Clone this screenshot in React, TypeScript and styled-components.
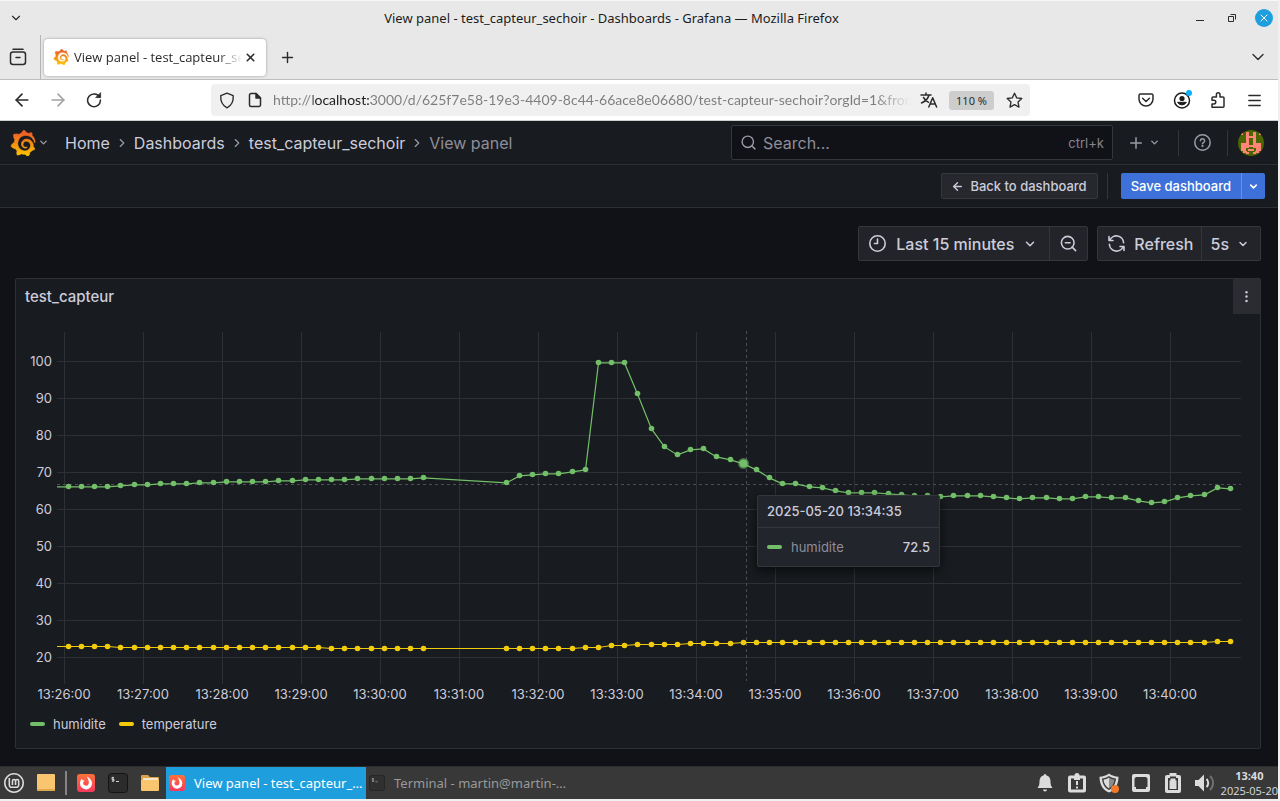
import React from "react";
import styled, { createGlobalStyle, css } from "styled-components";
import {
  ArrowLeft,
  ArrowRight,
  ChevronDown,
  ChevronRight,
  EllipsisVertical,
  Menu,
  Plus,
  Search,
  X,
  ZoomOut,
} from "lucide-react";
import { SiGrafana, SiLinuxmint } from "react-icons/si";

const SYSTEM_FONT = '"Noto Sans", "Open Sans", sans-serif';
const NARROW_SYSTEM_FONT = '"Open Sans", "Noto Sans", sans-serif';
const APP_FONT = 'Inter, "Liberation Sans", sans-serif';

const GlobalStyle = createGlobalStyle`
  *, *::before, *::after { box-sizing: border-box; }
  body { margin: 0; background: #f0f0f0; }
  button, input { font: inherit; color: inherit; margin: 0; }
  button { border: 0; padding: 0; background: none; cursor: pointer; }
  a { color: inherit; text-decoration: none; }
  svg { display: block; flex: none; }
`;

const Desktop = styled.div`
  display: flex;
  flex-direction: column;
  min-height: 100vh;
  padding: 0 2px 2px 0;
  font-family: ${SYSTEM_FONT};
`;

/* ---------- window frame ---------- */

const TitleBar = styled.header`
  display: flex;
  align-items: center;
  height: 35px;
  border-top: 1px solid #f8f8f8;
  background: #e8e8e8;
  color: #2b2b2b;
`;

const WindowMenu = styled.button`
  display: flex;
  align-items: center;
  justify-content: center;
  width: 32px;
  height: 32px;
`;

const WindowTitle = styled.h1`
  flex: 1;
  margin: 0;
  text-align: center;
  font-size: 13px;
  line-height: 18px;
  font-weight: 400;
  color: #1c1c1c;
`;

const WindowControls = styled.div`
  display: flex;
  align-items: center;
  gap: 14px;
  padding-right: 5px;
`;

const WindowControl = styled.button<{ $close?: boolean }>`
  display: flex;
  align-items: center;
  justify-content: center;
  width: 18px;
  height: 18px;
  border-radius: 9px;
  color: ${(p) => (p.$close ? "#fff" : "#2b2b2b")};
  background: ${(p) => (p.$close ? "#1f9ede" : "transparent")};
`;

/* ---------- browser chrome ---------- */

const TabStrip = styled.div`
  display: flex;
  align-items: center;
  height: 45px;
  border-bottom: 1px solid #bdbdbd;
  background: #e8e8e8;
  color: #2b2b2b;
`;

const ChromeButton = styled.button<{ $size?: number; $dim?: boolean }>`
  display: flex;
  align-items: center;
  justify-content: center;
  width: ${(p) => p.$size ?? 36}px;
  height: 32px;
  flex: none;
  color: ${(p) => (p.$dim ? "#a3a3a3" : "#2b2b2b")};
`;

const TabDivider = styled.span`
  width: 1px;
  align-self: stretch;
  margin: 0 3px 0 4px;
  background: #b4b4b4;
`;

const Tab = styled.div`
  display: flex;
  align-items: center;
  width: 222px;
  height: 37px;
  padding: 0 8px 0 9px;
  border-radius: 4px;
  background: #fff;
  box-shadow: 0 0 3px rgba(0, 0, 0, 0.35);
`;

const TabLabel = styled.button`
  flex: 1;
  min-width: 0;
  margin-left: 5px;
  overflow: hidden;
  white-space: nowrap;
  text-align: left;
  font-family: ${NARROW_SYSTEM_FONT};
  font-size: 13px;
  line-height: 20px;
  color: #2b2b2b;
  mask-image: linear-gradient(90deg, #000 calc(100% - 24px), transparent);
`;

const TabClose = styled.button`
  display: flex;
  align-items: center;
  justify-content: center;
  width: 16px;
  height: 24px;
`;

const Spacer = styled.span`
  flex: 1;
`;

const ToolBar = styled.nav`
  display: flex;
  align-items: center;
  height: 41px;
  padding: 0 6px 0 4px;
  border-bottom: 1px solid #cfcfcf;
  background: #fff;
`;

const AddressBar = styled.div`
  display: flex;
  align-items: center;
  flex: 1;
  min-width: 0;
  height: 32px;
  margin: 0 98px 0 99px;
  padding: 0 2px;
  border-radius: 4px;
  background: #f0f0f0;
`;

const Address = styled.input`
  flex: 1;
  min-width: 0;
  margin: 0 4px;
  padding: 0;
  border: 0;
  outline: 0;
  font-family: Lato, ${NARROW_SYSTEM_FONT};
  font-size: 14px;
  line-height: 24px;
  color: #7c7c7c;
  background: linear-gradient(
    90deg,
    #7c7c7c 40px,
    #1c1c1c 40px,
    #1c1c1c 98px,
    #7c7c7c 98px,
    #7c7c7c calc(100% - 36px),
    #f0f0f0
  );
  background-clip: text;
  -webkit-background-clip: text;
  -webkit-text-fill-color: transparent;
`;

const ZoomLevel = styled.button`
  width: 45px;
  height: 19px;
  margin: 0 6px;
  border-radius: 3px;
  background: #cdcdcd;
  color: #2b2b2b;
  font-size: 11px;
  line-height: 19px;
`;

/* ---------- Grafana header ---------- */

const Page = styled.div`
  display: flex;
  flex-direction: column;
  flex: 1;
  background: #111217;
  color: #ccccdc;
  font-family: ${APP_FONT};
`;

const NavBar = styled.header`
  display: flex;
  align-items: center;
  height: 44px;
  padding: 0 14px 0 8px;
  border-bottom: 1px solid #2d2f34;
  background: #181b1f;
`;

const HomeMenu = styled.button`
  display: flex;
  align-items: center;
  gap: 2px;
  color: #9b9ba7;
`;

const Crumbs = styled.ol`
  display: flex;
  align-items: center;
  gap: 5px;
  flex: 1;
  margin: 0 0 0 16px;
  padding: 0;
  list-style: none;
  font-size: 16px;
  line-height: 24px;
`;

const Crumb = styled.li<{ $current?: boolean }>`
  display: flex;
  align-items: center;
  gap: 5px;
  color: ${(p) => (p.$current ? "#8e8e9a" : "#ccccdc")};
  svg { color: #9b9ba7; }
`;

const SearchBox = styled.label`
  display: flex;
  align-items: center;
  gap: 6px;
  width: 382px;
  height: 35px;
  padding: 0 8px;
  border: 1px solid #34363c;
  border-radius: 2px;
  background: #111217;
  color: #9b9ba7;
  font-size: 16px;
`;

const SearchInput = styled.input`
  flex: 1;
  min-width: 0;
  padding: 0;
  border: 0;
  outline: 0;
  background: none;
  &::placeholder { color: #8e8e9a; opacity: 1; }
`;

const Shortcut = styled.kbd`
  font-family: ${APP_FONT};
  font-size: 13px;
  color: #85858f;
`;

const NavAction = styled.button<{ $gap: number }>`
  display: flex;
  align-items: center;
  gap: 4px;
  margin-left: ${(p) => p.$gap}px;
  color: #9b9ba7;
`;

const Separator = styled.span<{ $before: number }>`
  width: 1px;
  height: 26px;
  margin-left: ${(p) => p.$before}px;
  background: #34363c;
`;

const ActionBar = styled.div`
  display: flex;
  align-items: center;
  justify-content: flex-end;
  height: 43px;
  padding: 0 13px;
  border-bottom: 1px solid #2d2f34;
  background: #181b1f;
`;

const smallButton = css`
  display: flex;
  align-items: center;
  height: 26px;
  font-size: 13px;
  line-height: 24px;
  font-weight: 500;
`;

const BackButton = styled.button`
  ${smallButton}
  gap: 6px;
  padding: 0 10px 0 9px;
  border: 1px solid #36383e;
  border-radius: 2px;
  background: #26282d;
  color: #ccccdc;
`;

const SaveGroup = styled.div`
  display: flex;
  margin-left: 13px;
`;

const SaveButton = styled.button`
  ${smallButton}
  padding: 0 10px;
  border-radius: 2px 0 0 2px;
  background: #3d71d9;
  color: #fff;
  & + & {
    width: 24px;
    padding: 0;
    justify-content: center;
    border-left: 1px solid #6a92e2;
    border-radius: 0 2px 2px 0;
  }
`;

/* ---------- dashboard body ---------- */

const Body = styled.main`
  display: flex;
  flex-direction: column;
  flex: 1;
  gap: 17px;
  padding: 18px 17px 17px 15px;
`;

const TimeControls = styled.div`
  display: flex;
  justify-content: flex-end;
  gap: 9px;
`;

const ButtonGroup = styled.div`
  display: flex;
  border: 1px solid #34363b;
  border-radius: 2px;
  background: #222429;
`;

const GroupButton = styled.button<{ $gap?: number; $pad?: string }>`
  display: flex;
  align-items: center;
  gap: ${(p) => p.$gap ?? 8}px;
  height: 33px;
  padding: ${(p) => p.$pad ?? "0 9px"};
  font-size: 16px;
  font-weight: 500;
  color: #ccccdc;
  & + & { border-left: 1px solid #34363b; }
`;

const Panel = styled.section`
  border: 1px solid #2d2f34;
  border-radius: 2px;
  background: #181b1f;
`;

const PanelHeader = styled.header`
  display: flex;
  align-items: center;
  justify-content: space-between;
  height: 35px;
  padding-left: 9px;
`;

const PanelTitle = styled.h2`
  margin: 0;
  font-size: 15px;
  line-height: 22px;
  font-weight: 500;
`;

const PanelMenu = styled.button`
  display: flex;
  align-items: center;
  justify-content: center;
  width: 27px;
  height: 35px;
  background: #2a2c31;
  color: #ccccdc;
`;

const ChartArea = styled.div`
  position: relative;
`;

const Chart = styled.svg`
  width: 100%;
  height: auto;
  text {
    font-family: ${APP_FONT};
    font-size: 13px;
    fill: #ccccdc;
  }
`;

const Legend = styled.ul`
  display: flex;
  gap: 13px;
  height: 38px;
  margin: 0;
  padding: 4px 14px;
  list-style: none;
`;

const LegendItem = styled.button`
  display: flex;
  align-items: center;
  gap: 8px;
  font-size: 13px;
  line-height: 20px;
`;

const Swatch = styled.span<{ $color: string }>`
  width: 15px;
  height: 4px;
  border-radius: 2px;
  background: ${(p) => p.$color};
`;

const Tooltip = styled.div`
  position: absolute;
  left: 741px;
  top: 181px;
  width: 183px;
  border: 1px solid #34363c;
  border-radius: 2px;
  background: #22252b;
  box-shadow: 0 4px 10px rgba(0, 0, 0, 0.6);
  font-size: 13px;
  font-weight: 500;
`;

const TooltipTime = styled.div`
  height: 32px;
  padding: 0 9px;
  border-bottom: 1px solid #34363c;
  line-height: 31px;
`;

const TooltipRow = styled.div`
  display: flex;
  align-items: center;
  gap: 9px;
  height: 38px;
  padding: 0 9px;
`;

const TooltipName = styled.span`
  flex: 1;
  font-weight: 400;
  color: #8e8e9a;
`;

/* ---------- desktop task bar ---------- */

const TaskBar = styled.footer`
  display: flex;
  align-items: center;
  height: 33px;
  padding-left: 4px;
  border-top: 1px solid #2c2c2c;
  background: #383838;
  color: #dcdcdc;
`;

const Launchers = styled.div`
  display: flex;
  align-items: center;
  gap: 12px;
  padding-right: 6px;
`;

const Launcher = styled.button`
  display: flex;
  align-items: center;
  justify-content: center;
  width: 20px;
  height: 20px;
`;

const LauncherDivider = styled.span`
  width: 2px;
  height: 24px;
  margin: 0 -3px;
  background: #858585;
`;

const Task = styled.button<{ $active?: boolean }>`
  display: flex;
  align-items: center;
  gap: 9px;
  width: 200px;
  height: 32px;
  padding-left: 3px;
  background: ${(p) => (p.$active ? "#1f9ede" : "transparent")};
  color: ${(p) => (p.$active ? "#fff" : "#9a9a9a")};
  font-size: 13px;
  line-height: 20px;
  span { white-space: nowrap; }
`;

const Tray = styled.div`
  display: flex;
  align-items: center;
  gap: 12px;
  margin-left: auto;
`;

const Clock = styled.time`
  display: flex;
  flex-direction: column;
  align-items: center;
  margin-left: -6px;
  font-family: ${NARROW_SYSTEM_FONT};
  font-size: 11px;
  line-height: 15px;
`;

/* ---------- drawings ---------- */

const stroke = {
  fill: "none",
  stroke: "currentColor",
  strokeLinecap: "round" as const,
  strokeLinejoin: "round" as const,
};

const ArchiveIcon = () => (
  <svg width="18" height="18" viewBox="0 0 18 18" {...stroke} strokeWidth="1.5">
    <path d="M4 1.2h10" />
    <rect x="1.5" y="4" width="15" height="12.5" rx="2.5" />
    <path d="M7 9.500h4" />
  </svg>
);

const ReloadIcon = () => (
  <svg width="16" height="16" viewBox="0 0 16 16" {...stroke} strokeWidth="1.5">
    <path d="M13.6 5.2A6.4 6.4 0 1 0 14.4 8" />
    <path d="M10 5.6h4.6V1z" fill="currentColor" strokeWidth="0.8" />
  </svg>
);

const ShieldIcon = () => (
  <svg width="16" height="17" viewBox="0 0 16 17" {...stroke} strokeWidth="1.4">
    <path d="M8 1.2 14.2 3.6c.4 5.4-1.6 9.8-6.2 12.2C3.4 13.4 1.400 9 1.800 3.600z" />
  </svg>
);

const PageIcon = () => (
  <svg width="14" height="16" viewBox="0 0 14 16" {...stroke} strokeWidth="1.5">
    <path d="M8 1.500H3a1.500 1.500 0 0 0-1.500 1.500v10A1.500 1.500 0 0 0 3 14.500h8a1.500 1.500 0 0 0 1.500-1.500V6z" />
    <path d="M8 1.500V6h4.500z" fill="currentColor" />
  </svg>
);

const TranslateIcon = () => (
  <svg width="18" height="16" viewBox="0 0 18 16" {...stroke} strokeWidth="1.5">
    <path d="M1 3h10M6 1v2M9 3C8 7 5 9.500 1.500 11M3.500 5.500C5 8 6.500 9.300 8.500 10.300" />
    <path d="M8.800 15 12.700 5.800 16.600 15M10 12h5.400" />
  </svg>
);

const StarIcon = () => (
  <svg width="17" height="17" viewBox="0 0 17 17" {...stroke} strokeWidth="1.3">
    <path d="M8.500 1.200 10.700 5.900l5.100.6-3.800 3.500 1 5.100-4.500-2.500L4 15.100 5 10 1.200 6.500l5.100-.6z" />
  </svg>
);

const PocketIcon = () => (
  <svg width="16" height="14" viewBox="0 0 16 14" {...stroke} strokeWidth="1.500">
    <path d="M2.500 1h11A1.500 1.500 0 0 1 15 2.500V6A7 7 0 0 1 1 6V2.500A1.500 1.500 0 0 1 2.500 1z" />
    <path d="M4.600 5.200 8 8.500l3.400-3.300" />
  </svg>
);

const AccountIcon = () => (
  <svg width="20" height="20" viewBox="0 0 20 20">
    <circle cx="10" cy="10.500" r="7.500" fill="none" stroke="#1c1c1c" strokeWidth="1.500" />
    <circle cx="10" cy="8.500" r="2.600" fill="#1c1c1c" />
    <path d="M5.600 12.300h8.800a5 5 0 0 1-8.800 0z" fill="#1c1c1c" stroke="#1c1c1c" />
    <circle cx="17" cy="3" r="3" fill="#0ab1fb" />
  </svg>
);

const ExtensionIcon = () => (
  <svg width="16" height="18" viewBox="0 0 16 18" {...stroke} strokeWidth="1.500">
    <path d="M2 16.300h11a1 1 0 0 0 1-1V7a1 1 0 0 0-1-1h-3V3.500a1.800 1.800 0 0 0-3.600 0V6H3a1 1 0 0 0-1 1v2.300h2a1.700 1.700 0 0 1 0 3.600H2z" />
  </svg>
);

const GrafanaMark = ({ size, id }: { size: number; id: string }) => (
  <>
    <svg width="0" height="0">
      <defs>
        <linearGradient id={id} x1="0" y1="1" x2="0" y2="0">
          <stop offset="0" stopColor="#fcc600" />
          <stop offset="1" stopColor="#f0522a" />
        </linearGradient>
      </defs>
    </svg>
    <SiGrafana size={size} fill={`url(#${id})`} stroke={`url(#${id})`} strokeWidth="0.7" />
  </>
);

const HelpIcon = () => (
  <svg width="19" height="19" viewBox="0 0 19 19" {...stroke} strokeWidth="1.500">
    <circle cx="9.500" cy="9.500" r="7.700" />
    <path d="M7.400 7.700a2.100 2.100 0 1 1 2.900 2c-.6.200-.8.500-.8 1" />
    <circle cx="9.500" cy="13" r=".4" fill="currentColor" />
  </svg>
);

const ClockIcon = () => (
  <svg width="19" height="19" viewBox="0 0 19 19" {...stroke} strokeWidth="1.600">
    <circle cx="9.500" cy="9.500" r="7.700" />
    <path d="M9.500 5v4.500H6.500" />
  </svg>
);

const RefreshIcon = () => (
  <svg width="19" height="19" viewBox="0 0 19 19" {...stroke} strokeWidth="1.600">
    <path d="M2 2.500v4h4M2.700 6.500A7.200 7.200 0 0 1 16.600 8.700" />
    <path d="M17 16.500v-4h-4M16.300 12.500A7.200 7.200 0 0 1 2.400 10.300" />
  </svg>
);

const Avatar = () => (
  <svg width="26" height="26" viewBox="0 0 26 26">
    <clipPath id="avatar-clip">
      <circle cx="13" cy="13" r="13" />
    </clipPath>
    <g clipPath="url(#avatar-clip)">
      <path fill="#4b6404" d="M0 0h26v26H0z" />
      <path
        fill="#ff8577"
        d="M8 2h3v4h4V2h3v10h-3V8h-4v4H8zM3 3h2v2H3zM21 3h2v2h-2zM3 13h5v-1h3v3h4v-3h3v1h5v8h-5v-3h-3v-1h-4v1H8v3H3zM5 21h4v2H5zM17 21h4v2h-4zM10 19h6v2h-6zM8 22h3v2H8zM15 22h3v2h-3z"
      />
    </g>
  </svg>
);

const FirefoxIcon = ({ size }: { size: number }) => (
  <svg width={size} height={size} viewBox="0 0 18 18">
    <defs>
      <linearGradient id="fox" x1="0" y1="0" x2="0" y2="1">
        <stop offset="0" stopColor="#ff7139" />
        <stop offset="1" stopColor="#f5395f" />
      </linearGradient>
    </defs>
    <rect width="18" height="18" rx="3" fill="url(#fox)" />
    <path
      fill="#fff"
      d="M9.500 2.500c2.800 1.200 5.500 3.500 5.500 7A6 6 0 0 1 3 9.300c0-2 .8-3.500 1.800-4.800l.7 1.800 2.300.3-1.500 1.500c-.7 1.600.6 3.600 2.700 3.600 3.400 0 4-4.500.5-9.200z"
    />
  </svg>
);

const TerminalIcon = ({ size, faded }: { size: number; faded?: boolean }) => (
  <svg width={size} height={size} viewBox="0 0 20 20" opacity={faded ? 0.6 : 1}>
    <rect x=".5" y=".5" width="19" height="19" rx="3" fill="#2b2b2b" stroke="#141414" />
    <path d="M6 4.500H4v1.800h2V8H3.800M5 3.800v5M8 8.500h3" fill="none" stroke="#d0d0d0" strokeWidth="1" />
  </svg>
);

const DesktopIcon = () => (
  <svg width="18" height="18" viewBox="0 0 18 18">
    <rect width="18" height="17" rx="1" fill="#f9c66f" />
    <path d="M0 15h18v2H0z" fill="#e0a951" />
  </svg>
);

const FolderIcon = () => (
  <svg width="18" height="18" viewBox="0 0 18 18">
    <path d="M0 2a1 1 0 0 1 1-1h6l2 2h8a1 1 0 0 1 1 1v6H0z" fill="#dca248" />
    <path d="M2 4h15v3H2z" fill="#f3e6cc" />
    <path d="M0 6h18v10a1 1 0 0 1-1 1H1a1 1 0 0 1-1-1z" fill="#f9c66f" />
  </svg>
);

const TrayIcon = ({ children, label }: { children: React.ReactNode; label: string }) => (
  <Launcher aria-label={label}>
    <svg width="20" height="20" viewBox="0 0 20 20" fill="#dcdcdc">
      {children}
    </svg>
  </Launcher>
);

/* ---------- chart data ---------- */

const BEFORE_GAP = { start: 68.2, count: 28 };
const AFTER_GAP = { start: 506.3, count: 56 };
const STEP = 79 / 6;

const fill = (pairs: [number, number][]) =>
  pairs.flatMap(([y, n]) => Array<number>(n).fill(y));

const xs = [BEFORE_GAP, AFTER_GAP].flatMap(({ start, count }) =>
  Array.from({ length: count }, (_, k) => Math.floor(start + k * STEP) + 0.5)
);

const humidity = fill([
  [486, 4], [485, 1], [484, 2], [483, 3], [482, 2], [481, 4], [480, 2], [479, 4], [478, 5], [477, 1],
  [482, 1], [475, 1], [474, 1], [473, 2], [471, 1], [469, 1], [362, 3], [393, 1], [428, 1], [446, 1],
  [454, 1], [449, 1], [448, 1], [456, 1], [459, 1], [463, 1], [469, 1], [477, 1], [483, 2], [486, 1],
  [487, 1], [490, 1], [492, 3], [493, 1], [494, 1], [495, 2], [496, 1], [495, 3], [496, 1], [497, 1],
  [498, 1], [497, 2], [498, 2], [496, 2], [497, 2], [500, 1], [502, 1], [501, 1], [497, 1], [495, 1],
  [494, 1], [487, 1], [488, 1],
]);

const temperature = fill([
  [646, 4], [647, 16], [648, 8],
  [648, 6], [647, 2], [645, 2], [644, 4], [643, 4], [642, 36], [641, 2],
]);

const tracePath = (ys: number[], shift: number) =>
  `M57 ${ys[0] + shift}` + ys.map((y, i) => `L${xs[i]} ${y + shift}`).join("");

const yTicks = Array.from({ length: 9 }, (_, i) => ({ label: 100 - i * 10, y: 361.5 + i * 37 }));
const xTicks = Array.from({ length: 15 }, (_, i) => ({ label: `13:${26 + i}:00`, x: 64.5 + i * 79 }));

const GREEN = "#73bf69";
const YELLOW = "#f2cc0c";

const SensorChart = () => (
  <Chart viewBox="16 314 1244 396" role="img" aria-label="humidite, temperature">
    <g stroke="#2d3034">
      {yTicks.map((t) => (
        <line key={t.label} x1="57" x2="1241" y1={t.y} y2={t.y} />
      ))}
      {xTicks.map((t) => (
        <line key={t.label} x1={t.x} x2={t.x} y1="332" y2="684" />
      ))}
    </g>
    {yTicks.map((t) => (
      <text key={t.label} x="52" y={t.y + 4} textAnchor="end">
        {t.label}
      </text>
    ))}
    {xTicks.map((t) => (
      <text key={t.label} x={t.x - 0.5} y="699" textAnchor="middle">
        {t.label}
      </text>
    ))}
    <g stroke="#4c4e53" strokeDasharray="3 3">
      <line x1="746.500" x2="746.500" y1="331" y2="681" />
      <line x1="57" x2="1241" y1="484.500" y2="484.500" />
    </g>
    <g fill="none">
      <path d={tracePath(humidity, 0.9)} stroke={GREEN} strokeWidth="1.2" />
      <path d={tracePath(temperature, 0.5)} stroke={YELLOW} />
    </g>
    <g fill={GREEN}>
      {humidity.map((y, i) => (
        <circle key={i} cx={xs[i]} cy={y + 0.5} r="2.800" />
      ))}
    </g>
    <g fill={YELLOW}>
      {temperature.map((y, i) => (
        <circle key={i} cx={xs[i]} cy={y + 0.5} r="2.800" />
      ))}
    </g>
    <circle cx="743.500" cy="463.500" r="5.500" fill={GREEN} fillOpacity="0.5" />
    <circle cx="743.500" cy="463.500" r="4" fill={GREEN} />
  </Chart>
);

export default function App() {
  return (
    <Desktop>
      <GlobalStyle />
      <TitleBar>
        <WindowMenu aria-label="Window menu">
          <ChevronDown size={14} strokeWidth={2} />
        </WindowMenu>
        <WindowTitle>View panel - test_capteur_sechoir - Dashboards - Grafana — Mozilla Firefox</WindowTitle>
        <WindowControls>
          <WindowControl aria-label="Minimize">
            <svg width="8" height="8" viewBox="0 0 8 8"><path d="M0 6.500h8" stroke="currentColor" /></svg>
          </WindowControl>
          <WindowControl aria-label="Restore">
            <svg width="8" height="8" viewBox="0 0 8 8" fill="none" stroke="currentColor">
              <path d="M.5 2.500h5v5h-5zM2.500.5h5v5" />
            </svg>
          </WindowControl>
          <WindowControl $close aria-label="Close">
            <X size={12} strokeWidth={2} />
          </WindowControl>
        </WindowControls>
      </TitleBar>

      <TabStrip>
        <ChromeButton aria-label="Recent browsing"><ArchiveIcon /></ChromeButton>
        <TabDivider />
        <Tab>
          <GrafanaMark size={16} id="tab-flame" />
          <TabLabel>View panel - test_capteur_sechoir</TabLabel>
          <TabClose aria-label="Close tab"><X size={13} strokeWidth={3} /></TabClose>
        </Tab>
        <ChromeButton $size={42} aria-label="New tab"><Plus size={17} strokeWidth={2} /></ChromeButton>
        <Spacer />
        <ChromeButton $size={40} aria-label="List all tabs"><ChevronDown size={20} strokeWidth={1.6} /></ChromeButton>
      </TabStrip>

      <ToolBar>
        <ChromeButton aria-label="Back"><ArrowLeft size={20} strokeWidth={2} /></ChromeButton>
        <ChromeButton $dim aria-label="Forward"><ArrowRight size={20} strokeWidth={2} /></ChromeButton>
        <ChromeButton aria-label="Reload"><ReloadIcon /></ChromeButton>
        <AddressBar>
          <ChromeButton $size={28} aria-label="Tracking protection"><ShieldIcon /></ChromeButton>
          <ChromeButton $size={28} aria-label="Site information"><PageIcon /></ChromeButton>
          <Address
            aria-label="Address"
            defaultValue="http://localhost:3000/d/625f7e58-19e3-4409-8c44-66ace8e06680/test-capteur-sechoir?orgId=1&from"
          />
          <ChromeButton $size={28} aria-label="Translate"><TranslateIcon /></ChromeButton>
          <ZoomLevel>110 %</ZoomLevel>
          <ChromeButton $size={28} aria-label="Bookmark"><StarIcon /></ChromeButton>
        </AddressBar>
        <ChromeButton aria-label="Pocket"><PocketIcon /></ChromeButton>
        <ChromeButton aria-label="Account"><AccountIcon /></ChromeButton>
        <ChromeButton aria-label="Extensions"><ExtensionIcon /></ChromeButton>
        <ChromeButton aria-label="Menu"><Menu size={17} strokeWidth={2} /></ChromeButton>
      </ToolBar>

      <Page>
        <NavBar>
          <HomeMenu aria-label="Grafana menu">
            <GrafanaMark size={26} id="nav-flame" />
            <ChevronDown size={11} strokeWidth={3} />
          </HomeMenu>
          <Crumbs>
            <Crumb><a href="#home">Home</a><ChevronRight size={14} /></Crumb>
            <Crumb><a href="#dashboards">Dashboards</a><ChevronRight size={14} /></Crumb>
            <Crumb><a href="#dashboard">test_capteur_sechoir</a><ChevronRight size={14} /></Crumb>
            <Crumb $current>View panel</Crumb>
          </Crumbs>
          <SearchBox>
            <Search size={17} strokeWidth={2} />
            <SearchInput aria-label="Search" placeholder="Search..." />
            <Shortcut>ctrl+k</Shortcut>
          </SearchBox>
          <NavAction $gap={14} aria-label="New">
            <Plus size={18} strokeWidth={2} />
            <ChevronDown size={11} strokeWidth={3} />
          </NavAction>
          <Separator $before={18} />
          <NavAction $gap={14} aria-label="Help"><HelpIcon /></NavAction>
          <Separator $before={15} />
          <NavAction $gap={10} aria-label="Profile"><Avatar /></NavAction>
        </NavBar>

        <ActionBar>
          <BackButton>
            <ArrowLeft size={13} strokeWidth={2.5} />
            Back to dashboard
          </BackButton>
          <Separator $before={9} />
          <SaveGroup>
            <SaveButton>Save dashboard</SaveButton>
            <SaveButton aria-label="More save options"><ChevronDown size={11} strokeWidth={3.5} /></SaveButton>
          </SaveGroup>
        </ActionBar>

        <Body>
          <TimeControls>
            <ButtonGroup>
              <GroupButton $gap={9} $pad="0 12px 0 9px">
                <ClockIcon />
                Last 15 minutes
                <ChevronDown size={14} strokeWidth={2.6} />
              </GroupButton>
              <GroupButton aria-label="Zoom out"><ZoomOut size={19} strokeWidth={2} /></GroupButton>
            </ButtonGroup>
            <ButtonGroup>
              <GroupButton $gap={8} $pad="0 8px 0 9px"><RefreshIcon />Refresh</GroupButton>
              <GroupButton $pad="0 11px 0 8px">
                5s
                <ChevronDown size={12} strokeWidth={3} />
              </GroupButton>
            </ButtonGroup>
          </TimeControls>

          <Panel>
            <PanelHeader>
              <PanelTitle>test_capteur</PanelTitle>
              <PanelMenu aria-label="Panel menu"><EllipsisVertical size={15} /></PanelMenu>
            </PanelHeader>
            <ChartArea>
              <SensorChart />
              <Tooltip role="tooltip">
                <TooltipTime>2025-05-20 13:34:35</TooltipTime>
                <TooltipRow>
                  <Swatch $color={GREEN} />
                  <TooltipName>humidite</TooltipName>
                  <span>72.5</span>
                </TooltipRow>
              </Tooltip>
            </ChartArea>
            <Legend>
              <li><LegendItem><Swatch $color={GREEN} />humidite</LegendItem></li>
              <li><LegendItem><Swatch $color={YELLOW} />temperature</LegendItem></li>
            </Legend>
          </Panel>
        </Body>
      </Page>

      <TaskBar>
        <Launchers>
          <Launcher aria-label="Menu"><SiLinuxmint size={20} /></Launcher>
          <Launcher aria-label="Show desktop"><DesktopIcon /></Launcher>
          <LauncherDivider />
          <Launcher aria-label="Firefox"><FirefoxIcon size={18} /></Launcher>
          <Launcher aria-label="Terminal"><TerminalIcon size={20} /></Launcher>
          <Launcher aria-label="Files"><FolderIcon /></Launcher>
        </Launchers>
        <Task $active>
          <FirefoxIcon size={16} />
          <span>View panel - test_capteur_…</span>
        </Task>
        <Task>
          <TerminalIcon size={16} faded />
          <span>Terminal - martin@martin-…</span>
        </Task>
        <Tray>
          <TrayIcon label="Notifications">
            <path d="M10 1a1.600 1.600 0 0 1 1.500 1.500C14.500 3.200 15.500 5.500 15.500 8.500c0 3 .5 4.500 2 6.500h-15c1.500-2 2-3.500 2-6.500 0-3 1-5.300 4-6A1.600 1.600 0 0 1 10 1zM8 16.500h4a2 2 0 0 1-4 0z" />
          </TrayIcon>
          <TrayIcon label="Reports">
            <path fillRule="evenodd" d="M7.500 2.500a2.500 2.500 0 0 1 5 0H17a2 2 0 0 1 2 2v13a2 2 0 0 1-2 2H3a2 2 0 0 1-2-2v-13a2 2 0 0 1 2-2zM4 5.500v11h12v-11h-3V7H7V5.500z" />
            <path d="M9 8h2v4H9zM9 13.500h2v2H9zM9 2h2v4H9z" />
          </TrayIcon>
          <TrayIcon label="Updates">
            <path d="M10 .5c3 2.200 6 3 9.500 3.200C19.500 11 16.500 17 10 19.500 3.500 17 .5 11 .5 3.700 4 3.500 7 2.700 10 .5z" />
            <path fill="#383838" d="M10 3c2.200 1.500 4.500 2.200 7 2.500-.4 5-2.500 9.200-7 11.500-4.500-2.300-6.600-6.500-7-11.500C5.500 5.200 7.800 4.500 10 3z" />
            <path d="M10 4.500v11C6.500 13.500 5 10.500 4.500 6.700 6.500 6.300 8.300 5.700 10 4.500z" />
            <path fill="#8c8c8c" d="M10 4.500v11c3.500-2 5-5 5.500-8.800C13.500 6.300 11.700 5.700 10 4.500z" />
            <circle cx="16" cy="16" r="4" fill="#f5792a" />
          </TrayIcon>
          <TrayIcon label="Display">
            <path fillRule="evenodd" d="M3 1h14a2 2 0 0 1 2 2v14a2 2 0 0 1-2 2H3a2 2 0 0 1-2-2V3a2 2 0 0 1 2-2zM5 4L3.500 5.500V14L5 14v2h10v-2h1.500V5.500L15 4z" />
          </TrayIcon>
          <TrayIcon label="Battery">
            <path fillRule="evenodd" d="M6.500 0h7v2H16a2 2 0 0 1 2 2v14a2 2 0 0 1-2 2H4a2 2 0 0 1-2-2V4a2 2 0 0 1 2-2h2.500zM5 5v12h10V5h-2V3.500H7V5z" />
            <path d="M6.500 7.500h1v-2h5v2h1V16h-7z" />
          </TrayIcon>
          <TrayIcon label="Volume">
            <path d="M0 7h3.500L9 1.500v17L3.500 13H0z" />
            <path d="M11.500 6a5.500 5.500 0 0 1 0 8" fill="none" stroke="#dcdcdc" strokeWidth="2" />
            <path d="M15 3a9.500 9.500 0 0 1 0 14" fill="none" stroke="#6f6f6f" strokeWidth="2" />
          </TrayIcon>
          <Clock>
            <strong>13:40</strong>
            <span>2025-05-20</span>
          </Clock>
        </Tray>
      </TaskBar>
    </Desktop>
  );
}
